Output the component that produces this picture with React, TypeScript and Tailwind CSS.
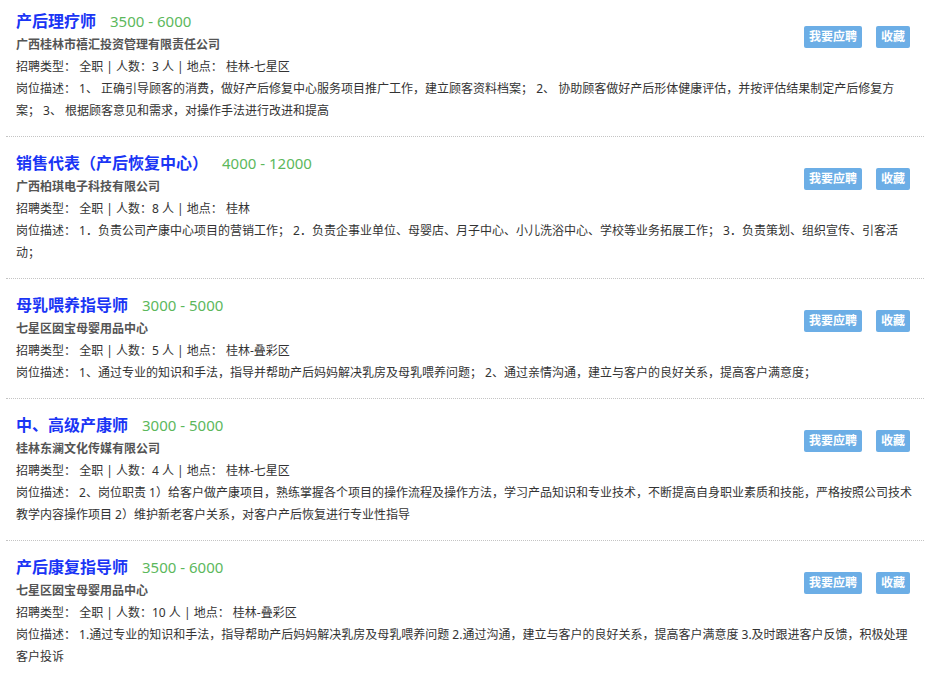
const jobs = [
  {
    title: "产后理疗师",
    salary: "3500 - 6000",
    company: "广西桂林市禧汇投资管理有限责任公司",
    type: "全职",
    count: 3,
    place: "桂林-七星区",
    desc: "1、 正确引导顾客的消费，做好产后修复中心服务项目推广工作，建立顾客资料档案； 2、 协助顾客做好产后形体健康评估，并按评估结果制定产后修复方案； 3、 根据顾客意见和需求，对操作手法进行改进和提高",
  },
  {
    title: "销售代表（产后恢复中心）",
    salary: "4000 - 12000",
    company: "广西柏琪电子科技有限公司",
    type: "全职",
    count: 8,
    place: "桂林",
    desc: "1．负责公司产康中心项目的营销工作； 2．负责企事业单位、母婴店、月子中心、小儿洗浴中心、学校等业务拓展工作； 3．负责策划、组织宣传、引客活动；",
  },
  {
    title: "母乳喂养指导师",
    salary: "3000 - 5000",
    company: "七星区囡宝母婴用品中心",
    type: "全职",
    count: 5,
    place: "桂林-叠彩区",
    desc: "1、通过专业的知识和手法，指导并帮助产后妈妈解决乳房及母乳喂养问题； 2、通过亲情沟通，建立与客户的良好关系，提高客户满意度；",
  },
  {
    title: "中、高级产康师",
    salary: "3000 - 5000",
    company: "桂林东澜文化传媒有限公司",
    type: "全职",
    count: 4,
    place: "桂林-七星区",
    desc: "2、岗位职责 1）给客户做产康项目，熟练掌握各个项目的操作流程及操作方法，学习产品知识和专业技术，不断提高自身职业素质和技能，严格按照公司技术教学内容操作项目 2）维护新老客户关系，对客户产后恢复进行专业性指导",
  },
  {
    title: "产后康复指导师",
    salary: "3500 - 6000",
    company: "七星区囡宝母婴用品中心",
    type: "全职",
    count: 10,
    place: "桂林-叠彩区",
    desc: "1.通过专业的知识和手法，指导帮助产后妈妈解决乳房及母乳喂养问题 2.通过沟通，建立与客户的良好关系，提高客户满意度 3.及时跟进客户反馈，积极处理客户投诉",
  },
];

export default function App() {
  return (
    <div className="min-h-screen bg-white font-['Noto_Sans','Noto_Sans_CJK_SC',sans-serif] overflow-hidden">
      <ul className="mx-[6px] w-[918px]">
        {jobs.map((job, idx) => (
          <li
            key={idx}
            className={
              "pl-[10px] pr-[7px] pb-[14px] border-b border-dotted border-[#c4c4c4] " +
              (idx === 0 ? "pt-[8px]" : "pt-[13px]")
            }
          >
            <div className="float-right mt-[18px] mr-[7px] flex gap-[14px]">
              <button className="h-[22px] px-[5px] rounded-[2px] bg-[#6caee6] text-white text-[12px] leading-[22px] font-bold">
                我要应聘
              </button>
              <button className="h-[22px] px-[5px] rounded-[2px] bg-[#6caee6] text-white text-[12px] leading-[22px] font-bold">
                收藏
              </button>
            </div>
            <div className="h-[26px] flex items-center">
              <span className="text-[16px] font-bold text-[#1a35f5]">{job.title}</span>
              <span className="ml-[14px] text-[15px] text-[#5cb85c]">{job.salary}</span>
            </div>
            <div className="text-[12px] leading-[22px] font-bold text-[#555]">{job.company}</div>
            <div className="text-[12px] leading-[22px] text-[#333]">
              招聘类型： {job.type} | 人数：{job.count} 人 | 地点： {job.place}
            </div>
            <p className="text-[12px] leading-[22px] text-[#333]">
              {"岗位描述： " + job.desc}
            </p>
          </li>
        ))}
      </ul>
    </div>
  );
}
